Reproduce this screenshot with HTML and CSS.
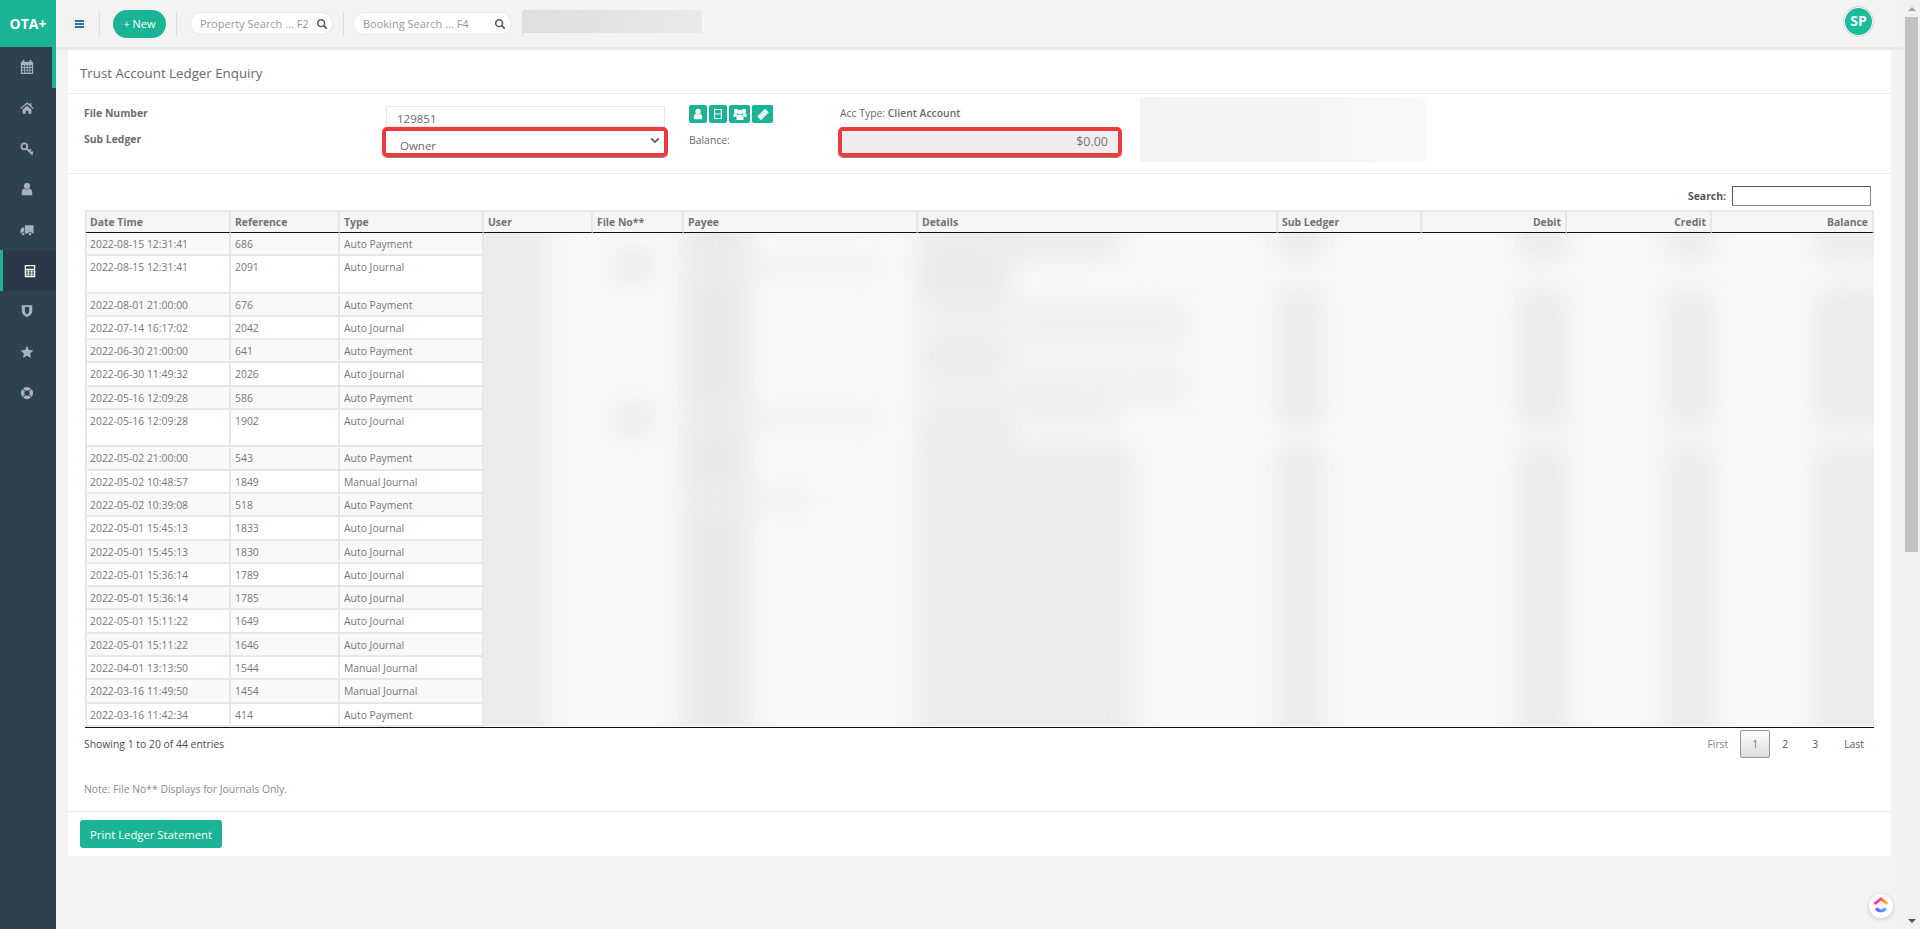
FILE: index.html
```html
<!DOCTYPE html>
<html lang="en">
<head>
    <meta charset="UTF-8">
    <meta name="viewport" content="width=device-width, initial-scale=1.0">
    <title>Trust Account Ledger Enquiry</title>
    <link rel="stylesheet" href="styles.css">
</head>
<body>
<div class="app">
    <aside class="sidebar">
        <div class="brand">OTA+</div>
        <nav class="side-nav">
            <a class="side-item first">
                <svg class="side-icon" viewBox="0 0 16 16"><path fill="currentColor" fill-rule="evenodd" d="M3 0h2v2h6V0h2v2h2v14H1V2h2zM2.500 6v2h2.200V6zm3.200 0v2h2V6zm3 0v2h2V6zm3 0v2h2V6zM2.500 9v2h2.200V9zm3.200 0v2h2V9zm3 0v2h2V9zm3 0v2h2V9zM2.500 12v2.500h2.200V12zm3.200 0v2.500h2V12zm3 0v2.500h2V12zm3 0v2.500h2V12z"/></svg>
            </a>
            <a class="side-item">
                <svg class="side-icon" viewBox="0 0 16 16"><path fill="currentColor" d="M8 1.500l3 2.600V2.500h2v3.300l2.700 2.400-.9 1L8 3.500 1.200 9.200l-.9-1zM3 9.600l5-4.200 5 4.200V14.500H9.500V11h-3v3.500H3z"/></svg>
            </a>
            <a class="side-item">
                <svg class="side-icon" viewBox="0 0 16 16"><g fill="none" stroke="currentColor" stroke-width="2"><circle cx="5" cy="5" r="3.300"/><path d="M7.500 7.500l7 7M10.500 10.500l2-2M12.800 12.800l1.800-1.800"/></g></svg>
            </a>
            <a class="side-item">
                <svg class="side-icon" viewBox="0 0 16 16"><circle fill="currentColor" cx="8" cy="4.500" r="3.500"/><path fill="currentColor" d="M2 15v-3c0-2.500 1.500-4 3-4.200 1.800 1.200 4.200 1.200 6 0 1.500.2 3 1.700 3 4.200v3z"/></svg>
            </a>
            <a class="side-item">
                <svg class="side-icon" viewBox="0 0 16 16"><path fill="currentColor" d="M5.500 2.500H15.500V12H5.500zM.5 8l2-3h2.200v7H.5z"/><circle fill="currentColor" stroke="#2f4050" cx="3.800" cy="12.500" r="2"/><circle fill="currentColor" stroke="#2f4050" cx="11.500" cy="12.500" r="2"/></svg>
            </a>
            <a class="side-item active">
                <svg class="side-icon" viewBox="0 0 16 16"><path fill="currentColor" fill-rule="evenodd" d="M2 1h12v14H2zM3.500 2.500v3h9v-3zM3.500 7v1.500h2V7zm3 0v1.500h3V7zm4 0v1.500h2V7zM3.500 9.500V11h2V9.500zm3 0V11h3V9.500zm4 0V11h2V9.500zM3.500 12v1.500h2V12zm3 0v1.500h3V12zm4 0v1.500h2V12z"/></svg>
            </a>
            <a class="side-item">
                <svg class="side-icon" viewBox="0 0 16 16"><path fill="currentColor" fill-rule="evenodd" d="M2 1.500h12V8c0 3.500-3 5.500-6 7-3-1.500-6-3.500-6-7zM5.500 3.500h5V8c0 2-1.200 3-2.500 4-1.300-1-2.500-2-2.500-4z"/></svg>
            </a>
            <a class="side-item">
                <svg class="side-icon" viewBox="0 0 16 16"><path fill="currentColor" d="M8 .8l2.200 4.800 5.200.6-3.900 3.500 1.100 5.200L8 12.300l-4.600 2.600 1.100-5.200L.6 6.200l5.200-.6z"/></svg>
            </a>
            <a class="side-item">
                <svg class="side-icon" viewBox="0 0 16 16"><circle cx="8" cy="8" r="5" fill="none" stroke="currentColor" stroke-width="4"/><path stroke="#2f4050" stroke-width="1.200" d="M2 2l4 4M14 2l-4 4M2 14l4-4M14 14l-4-4"/></svg>
            </a>
        </nav>
    </aside>

    <div class="page">
        <header class="topbar">
            <a class="hamburger"><span></span><span></span><span></span></a>
            <span class="top-sep sep-a"></span>
            <button class="new-btn">+ New</button>
            <span class="top-sep sep-b"></span>
            <div class="search-pill property">
                <span>Property Search ... F2</span>
                <svg class="search-icon" viewBox="0 0 14 14"><circle cx="6" cy="6" r="4" fill="none" stroke="currentColor" stroke-width="1.800"/><path d="M9 9l3.500 3.500" stroke="currentColor" stroke-width="2"/></svg>
            </div>
            <span class="top-sep sep-c"></span>
            <div class="search-pill booking">
                <span>Booking Search ... F4</span>
                <svg class="search-icon" viewBox="0 0 14 14"><circle cx="6" cy="6" r="4" fill="none" stroke="currentColor" stroke-width="1.800"/><path d="M9 9l3.500 3.500" stroke="currentColor" stroke-width="2"/></svg>
            </div>
            <span class="top-sep sep-d"></span>
            <div class="top-smudge"></div>
            <div class="avatar"><span>SP</span></div>
        </header>

        <main class="panel">
            <h1 class="panel-title">Trust Account Ledger Enquiry</h1>

            <section class="ledger-form">
                <label class="field-label" for="fileNumber">File Number</label>
                <div class="field-file"><input type="text" id="fileNumber" value="129851"></div>
                <div class="icon-btns">
                    <a class="icon-btn"><svg viewBox="0 0 16 16"><circle fill="#fff" cx="8" cy="4.500" r="3.500"/><path fill="#fff" d="M2.500 15v-3c0-2.500 1.300-4 2.800-4.200 1.600 1.200 3.800 1.200 5.400 0 1.500.2 2.800 1.700 2.800 4.200v3z"/></svg></a>
                    <a class="icon-btn"><svg viewBox="0 0 16 16"><path fill="none" stroke="#fff" stroke-width="1.500" d="M3.500 2h9v12h-9zM3.500 8h9"/></svg></a>
                    <a class="icon-btn wide"><svg viewBox="0 0 18 16"><g fill="#fff"><circle cx="4" cy="3.500" r="2.800"/><circle cx="14" cy="3.500" r="2.800"/><circle cx="9" cy="5" r="3.200"/><path d="M.5 11V8.500C.5 7.200 1.500 6.500 2.500 6.500h2.300l1 2V11zM17.500 11V8.500c0-1.300-1-2-2-2h-2.300l-1 2V11zM4.500 15v-4c0-1.500 1-2.500 2-2.500h5c1 0 2 1 2 2.500v4z"/></g></svg></a>
                    <a class="icon-btn wide"><svg viewBox="0 0 16 16"><path fill="#fff" d="M10.500 1L15 5.500 5.500 15 1 10.500z"/><path stroke="#1ab394" stroke-dasharray="1.500 1.200" d="M4.500 9l4.500-4.500M7 11.500L11.500 7"/></svg></a>
                </div>
                <div class="acc-type">Acc Type: <strong>Client Account</strong></div>
                <div class="form-smudge"></div>

                <label class="field-label sub" for="subLedger">Sub Ledger</label>
                <div class="field-select flagged">
                    <select id="subLedger"><option>Owner</option></select>
                    <svg class="chevron" viewBox="0 0 12 8"><path d="M1.500 1.500L6 6l4.500-4.500" fill="none" stroke="currentColor" stroke-width="2"/></svg>
                </div>
                <div class="balance-label">Balance:</div>
                <div class="flagged balance-box"><input type="text" value="$0.00" readonly></div>
            </section>

            <section class="ledger-table">
                <div class="table-search">
                    <label for="tableSearch">Search:</label>
                    <input type="search" id="tableSearch">
                </div>
                <table class="entries">
                    <colgroup>
                        <col class="c-date"><col class="c-ref"><col class="c-type"><col class="c-user"><col class="c-file"><col class="c-payee"><col class="c-details"><col class="c-sub"><col class="c-debit"><col class="c-credit"><col class="c-balance">
                    </colgroup>
                    <thead>
                        <tr>
                            <th>Date Time</th><th>Reference</th><th>Type</th><th>User</th><th>File No**</th><th>Payee</th><th>Details</th><th>Sub Ledger</th><th class="num">Debit</th><th class="num">Credit</th><th class="num">Balance</th>
                        </tr>
                    </thead>
                    <tbody>
                        <tr>
                            <td>2022-08-15 12:31:41</td><td>686</td><td>Auto Payment</td>
                            <td class="smeared" colspan="8" rowspan="20">
                                <div class="smear">
                                    <div class="smear-grid">
                                        <div class="smear-col user"></div>
                                        <div class="smear-col file"><i class="blot first"></i><i class="blot second"></i></div>
                                        <div class="smear-col payee"><i class="faint one"></i><i class="faint two"></i><i class="faint three"></i></div>
                                        <div class="smear-col details"><i class="bar d-one"></i><i class="bar d-two"></i><i class="bar d-three"></i><i class="bar d-four"></i><i class="bar d-five"></i></div>
                                        <div class="smear-col"><i class="bar top w-44"></i><i class="bar mid w-44"></i><i class="bar low w-44"></i></div>
                                        <div class="smear-col right"><i class="bar top w-48"></i><i class="bar mid w-48"></i><i class="bar low w-48"></i></div>
                                        <div class="smear-col right"><i class="bar top w-46"></i><i class="bar mid w-46"></i><i class="bar low w-46"></i></div>
                                        <div class="smear-col right"><i class="bar top w-78"></i><i class="bar mid w-78"></i><i class="bar low w-78"></i></div>
                                    </div>
                                </div>
                            </td>
                        </tr>
                        <tr class="tall"><td>2022-08-15 12:31:41</td><td>2091</td><td>Auto Journal</td></tr>
                        <tr><td>2022-08-01 21:00:00</td><td>676</td><td>Auto Payment</td></tr>
                        <tr><td>2022-07-14 16:17:02</td><td>2042</td><td>Auto Journal</td></tr>
                        <tr><td>2022-06-30 21:00:00</td><td>641</td><td>Auto Payment</td></tr>
                        <tr><td>2022-06-30 11:49:32</td><td>2026</td><td>Auto Journal</td></tr>
                        <tr><td>2022-05-16 12:09:28</td><td>586</td><td>Auto Payment</td></tr>
                        <tr class="tall"><td>2022-05-16 12:09:28</td><td>1902</td><td>Auto Journal</td></tr>
                        <tr><td>2022-05-02 21:00:00</td><td>543</td><td>Auto Payment</td></tr>
                        <tr><td>2022-05-02 10:48:57</td><td>1849</td><td>Manual Journal</td></tr>
                        <tr><td>2022-05-02 10:39:08</td><td>518</td><td>Auto Payment</td></tr>
                        <tr><td>2022-05-01 15:45:13</td><td>1833</td><td>Auto Journal</td></tr>
                        <tr><td>2022-05-01 15:45:13</td><td>1830</td><td>Auto Journal</td></tr>
                        <tr><td>2022-05-01 15:36:14</td><td>1789</td><td>Auto Journal</td></tr>
                        <tr><td>2022-05-01 15:36:14</td><td>1785</td><td>Auto Journal</td></tr>
                        <tr><td>2022-05-01 15:11:22</td><td>1649</td><td>Auto Journal</td></tr>
                        <tr><td>2022-05-01 15:11:22</td><td>1646</td><td>Auto Journal</td></tr>
                        <tr><td>2022-04-01 13:13:50</td><td>1544</td><td>Manual Journal</td></tr>
                        <tr><td>2022-03-16 11:49:50</td><td>1454</td><td>Manual Journal</td></tr>
                        <tr><td>2022-03-16 11:42:34</td><td>414</td><td>Auto Payment</td></tr>
                    </tbody>
                </table>
                <div class="table-foot">
                    <div class="table-info">Showing 1 to 20 of 44 entries</div>
                    <div class="paging">
                        <a class="muted">First</a><a class="current">1</a><a>2</a><a>3</a><a class="last">Last</a>
                    </div>
                </div>
                <p class="note">Note: File No** Displays for Journals Only.</p>
            </section>

            <footer class="panel-foot">
                <button class="print-btn">Print Ledger Statement</button>
            </footer>
        </main>
    </div>

    <div class="scrollbar">
        <span class="arrow up"></span>
        <span class="thumb"></span>
        <span class="track"></span>
        <span class="arrow down"></span>
    </div>
</div>

<div class="clickup">
    <svg viewBox="0 0 24 24">
        <defs>
            <linearGradient id="cuTop" x1="0" x2="1" y1="0" y2="0"><stop offset="0" stop-color="#fa12e3"/><stop offset="0.55" stop-color="#ff5c5c"/><stop offset="1" stop-color="#ffc800"/></linearGradient>
            <linearGradient id="cuBottom" x1="0" x2="1" y1="0" y2="0"><stop offset="0" stop-color="#8930fd"/><stop offset="1" stop-color="#49ccf9"/></linearGradient>
        </defs>
        <path d="M5.500 10L12 4.800 18.500 10" fill="none" stroke="url(#cuTop)" stroke-width="2.800"/>
        <path d="M6 15.500c3.500 3.800 8.500 3.800 12 0L15.800 13.500 12 15.800 8.200 13.500z" fill="url(#cuBottom)"/>
    </svg>
</div>
</body>
</html>
```

FILE: styles.css
```css
* {
    box-sizing: border-box;
}
html, body {
    margin: 0;
    height: 929px;
    overflow: hidden;
}
body {
    font-family: "Open Sans", "Liberation Sans", sans-serif;
    font-size: 10.4px;
    color: #676a6c;
    background-color: #f3f3f3;
}
.app {
    display: flex;
    height: 929px;
}

/* sidebar */
.sidebar {
    width: 56px;
    flex: none;
    background-color: #2f4050;
}
.brand {
    height: 47px;
    background-color: #1ab394;
    color: #fff;
    font-size: 14px;
    font-weight: 700;
    line-height: 47px;
    text-align: center;
}
.side-item {
    display: flex;
    align-items: center;
    justify-content: flex-start;
    height: 40.67px;
    padding-left: 20px;
    color: #a7b1c2;
}
.side-item.first {
    border-right: 4px solid #1ab394;
}
.side-item.active {
    padding-left: 20px;
    border-left: 3px solid #1ab394;
    background-color: #293846;
    color: #fff;
}
.side-icon {
    width: 14px;
    height: 14px;
}

/* top bar */
.page {
    flex: 1;
    min-width: 0;
}
.topbar {
    display: flex;
    align-items: center;
    height: 50px;
    padding-left: 19px;
    border-bottom: 3px solid #e7eaec;
}
.hamburger {
    display: flex;
    flex-direction: column;
    justify-content: space-between;
    width: 9px;
    height: 8px;
}
.hamburger span {
    height: 2px;
    background-color: #2a6fa8;
}
.top-sep {
    width: 1px;
    height: 24px;
    background-color: #dcdcdc;
}
.sep-a { margin-left: 15px; }
.sep-b { margin-left: 10px; }
.sep-c { margin-left: 10px; }
.sep-d { margin-left: 10px; }
.new-btn {
    width: 53px;
    height: 28px;
    margin-left: 13px;
    padding: 0;
    border: none;
    border-radius: 14px;
    background-color: #1ab394;
    color: #fff;
    font-family: inherit;
    font-size: 11px;
    font-weight: 500;
}
.search-pill {
    display: flex;
    align-items: center;
    justify-content: space-between;
    height: 23px;
    margin-left: 13px;
    padding: 0 4px 0 9px;
    border: 1px solid #e7e7e7;
    border-radius: 12px;
    background-color: #fff;
    color: #999;
    font-size: 11px;
}
.search-pill.property { width: 143px; }
.search-pill.booking { width: 159px; margin-left: 9px; padding-right: 5px; }
.search-icon {
    width: 12px;
    height: 12px;
    color: #4a5a60;
}
.top-smudge {
    width: 179px;
    height: 23px;
    margin-top: -4px;
    background: linear-gradient(90deg, #dedede, #e2e2e2 40%, #e9e9e9);
}
.avatar {
    display: flex;
    align-items: center;
    justify-content: center;
    width: 31px;
    height: 31px;
    margin-left: auto;
    margin-right: 29px;
    margin-top: -5px;
    border: 1px solid #cfcfcf;
    border-radius: 50%;
    background-color: #fff;
}
.avatar span {
    width: 27px;
    height: 27px;
    border-radius: 50%;
    background-color: #1abc9c;
    color: #f4fffb;
    font-size: 14px;
    font-weight: 700;
    line-height: 26px;
    text-align: center;
}

/* panel */
.panel {
    margin: 0 12px;
    background-color: #fff;
}
.panel-title {
    height: 44px;
    margin: 0;
    padding: 0 12px;
    border-bottom: 1px solid #e7eaec;
    font-size: 13.3px;
    font-weight: 400;
    line-height: 46px;
}
.ledger-form {
    display: grid;
    grid-template-columns: 298px 286px 170px 284px 287px;
    grid-template-rows: 21px 30px;
    height: 80px;
    padding: 12px 0 0 16px;
    border-bottom: 1px solid #e7eaec;
}
.field-label {
    color: #6b6e70;
    font-weight: 700;
    line-height: 14px;
}
.field-label.sub {
    margin-top: 5px;
}
.field-file input {
    width: 279px;
    height: 21px;
    margin-left: 4px;
    padding: 4px 10px 0;
    border: 1px solid #e5e6e7;
    color: #676a6c;
    font-family: inherit;
    font-size: 11.5px;
}
.flagged {
    border: 4px solid #ee3a3a;
    border-radius: 5px;
    box-shadow: 0 1px 0 #8a8a8a;
}
.field-select {
    position: relative;
    height: 30px;
}
.field-select select {
    width: 100%;
    height: 22px;
    padding: 6px 0 0 14px;
    border: none;
    outline: none;
    appearance: none;
    background-color: #fff;
    color: #676a6c;
    font-family: inherit;
    font-size: 11.5px;
}
.chevron {
    position: absolute;
    top: 6px;
    right: 4px;
    width: 10px;
    height: 7px;
    color: #555;
}
.icon-btns {
    display: flex;
    gap: 2px;
    grid-column: 3;
    margin: -1px 0 0 21px;
}
.icon-btn {
    display: flex;
    align-items: center;
    justify-content: center;
    width: 18px;
    height: 18px;
    border-radius: 2px;
    background-color: #1ab394;
}
.icon-btn.wide {
    width: 21px;
}
.icon-btn svg {
    width: 12px;
    height: 12px;
}
.icon-btn.wide svg {
    width: 14px;
    height: 13px;
}
.acc-type {
    margin-left: 2px;
    line-height: 14px;
}
.acc-type strong {
    font-weight: 600;
}
.form-smudge {
    grid-row: 1 / span 2;
    grid-column: 5;
    width: 287px;
    margin: -9px 0 -5px 18px;
    background: linear-gradient(90deg, #f3f3f3, #f4f4f4 60%, #fafafa);
}
.balance-label {
    margin: 6px 0 0 21px;
    line-height: 14px;
}
.balance-box {
    height: 30px;
}
.balance-box input {
    width: 100%;
    height: 22px;
    padding: 0 10px 2px 0;
    border: none;
    outline: none;
    background-color: #eee;
    color: #777;
    font-family: inherit;
    font-size: 12.5px;
    text-align: right;
}

/* table */
.ledger-table {
    height: 638px;
    padding: 12px 17px 0 16px;
    border-bottom: 1px solid #e7eaec;
}
.table-search {
    display: flex;
    align-items: center;
    justify-content: flex-end;
    gap: 6px;
    height: 20px;
    margin: 0 3px 4px 0;
    font-weight: 700;
    color: #555;
}
.table-search input {
    width: 139px;
    height: 20px;
    padding: 0 2px;
    border: 1px solid #555;
    border-bottom-color: #888;
    border-right-color: #888;
}
.entries {
    table-layout: fixed;
    width: 1789px;
    margin-left: 1px;
    border-collapse: separate;
    border-spacing: 0;
    border-bottom: 1px solid #111;
}
.c-date { width: 146px; }
.c-ref { width: 109px; }
.c-type { width: 144px; }
.c-user { width: 109px; }
.c-file { width: 91px; }
.c-payee { width: 234px; }
.c-details { width: 360px; }
.c-sub { width: 144px; }
.c-debit { width: 145px; }
.c-credit { width: 145px; }
.c-balance { width: 162px; }
.entries th {
    height: 23px;
    padding: 0 4px;
    border-top: 2px solid #e7e7e7;
    border-right: 2px solid #e7e7e7;
    border-bottom: 1px solid #111;
    background-color: #f5f5f5;
    color: #707375;
    font-weight: 700;
    text-align: left;
}
.entries th:first-child {
    padding-left: 3px;
    border-left: 2px solid #e7e7e7;
}
.entries th.num {
    padding-right: 4px;
    text-align: right;
}
.entries tbody tr {
    height: 23.3px;
}
.entries tbody tr.tall {
    height: 37.3px;
}
.entries td {
    padding: 4px 3px 0 4px;
    border-right: 2px solid #e7e7e7;
    border-bottom: 2px solid #e7e7e7;
    line-height: 14px;
    vertical-align: top;
    color: #73777a;
}
.entries td:first-child {
    padding-left: 3px;
    border-left: 2px solid #e7e7e7;
}
.entries tbody tr:nth-child(odd) td {
    background-color: #f9f9f9;
}
.entries td.smeared {
    padding: 0;
    border: none;
}

/* names and amounts hidden in the source, left as soft smudges */
.smear {
    height: 493px;
    overflow: hidden;
    background-color: #f8f8f8;
}
.smear-grid {
    display: grid;
    grid-template-columns: 129px 91px 234px 360px 144px 145px 145px 182px;
    height: 533px;
    margin: -20px -20px 0;
    filter: blur(13px);
}
.smear-col {
    display: flex;
    flex-direction: column;
    align-items: flex-start;
}
.smear-col.right {
    align-items: flex-end;
}
.smear-col.user {
    background: linear-gradient(#ebebeb, #ebebeb) no-repeat 0 0 / 82px 100%;
}
.smear-col.payee {
    background: linear-gradient(#e8e8e8, #e8e8e8) no-repeat 0 0 / 64px 100%;
}
.smear-col.details {
    background: linear-gradient(#e9e9e9, #e9e9e9) no-repeat 0 0 / 90px 100%;
}
.bar {
    display: block;
    background-color: #ebebeb;
}
.bar.top { height: 46px; }
.bar.mid { height: 138px; margin-top: 30px; }
.bar.low { height: 300px; margin-top: 20px; }
.w-44 { width: 44px; }
.w-46 { width: 46px; }
.w-48 { width: 48px; }
.w-78 { width: 78px; }
.d-one { width: 200px; height: 46px; }
.d-two { width: 270px; height: 50px; margin-top: 40px; background-color: #f0f0f0; }
.d-three { width: 270px; height: 40px; margin-top: 16px; background-color: #f0f0f0; }
.d-four { width: 200px; height: 20px; background-color: #eeeeee; }
.d-five { width: 215px; height: 300px; margin-top: 20px; background-color: #ececec; }
.faint {
    display: block;
    height: 14px;
    background-color: #eeeeee;
}
.faint.one { width: 200px; margin-top: 46px; }
.faint.two { width: 200px; margin-top: 138px; }
.faint.three { width: 135px; margin-top: 68px; }
.blot {
    display: block;
    width: 36px;
    height: 28px;
    margin-left: 22px;
    background-color: #e9e9e9;
}
.blot.first { margin-top: 38px; }
.blot.second { margin-top: 126px; }

.table-foot {
    display: flex;
    align-items: flex-start;
    justify-content: space-between;
    margin-right: -2px;
    padding-top: 2px;
}
.table-info {
    padding-top: 7px;
    line-height: 14px;
    color: #4a4c4e;
}
.paging {
    display: flex;
    color: #55585a;
    line-height: 26px;
}
.paging a {
    height: 28px;
    padding: 0 11px;
    border: 1px solid transparent;
}
.paging .last {
    margin-left: 2px;
}
.paging .muted {
    color: #858585;
}
.paging .current {
    border: 1px solid #979797;
    border-radius: 2px;
    background: linear-gradient(#fff, #dcdcdc);
    color: #777;
}
.note {
    margin: 24px 0 0;
    line-height: 14px;
    color: #8a8a8a;
}
.panel-foot {
    height: 44px;
    padding: 8px 12px;
}
.print-btn {
    display: block;
    width: 142px;
    height: 28px;
    padding: 0;
    border: none;
    border-radius: 3px;
    background-color: #1ab394;
    color: #fff;
    font-family: inherit;
    font-size: 11.3px;
    font-weight: 500;
}

/* page scrollbar */
.scrollbar {
    display: flex;
    flex-direction: column;
    width: 17px;
    flex: none;
    background-color: #f1f1f1;
}
.arrow {
    display: flex;
    align-items: center;
    justify-content: center;
    height: 17px;
}
.arrow::before {
    content: "";
    border-left: 4px solid transparent;
    border-right: 4px solid transparent;
}
.arrow.up::before {
    border-bottom: 4px solid #a3a3a3;
}
.arrow.down::before {
    border-top: 4px solid #505050;
}
.thumb {
    height: 535px;
    margin: 0 2px;
    background-color: #c1c1c1;
}
.track {
    flex: 1;
}

/* chat launcher floats over the page */
.clickup {
    position: fixed;
    right: 27px;
    bottom: 11px;
    width: 24px;
    height: 24px;
    border-radius: 50%;
    background-color: #fff;
    box-shadow: 0 1px 4px rgba(0, 0, 0, 0.2);
}
.clickup svg {
    display: block;
}
```
